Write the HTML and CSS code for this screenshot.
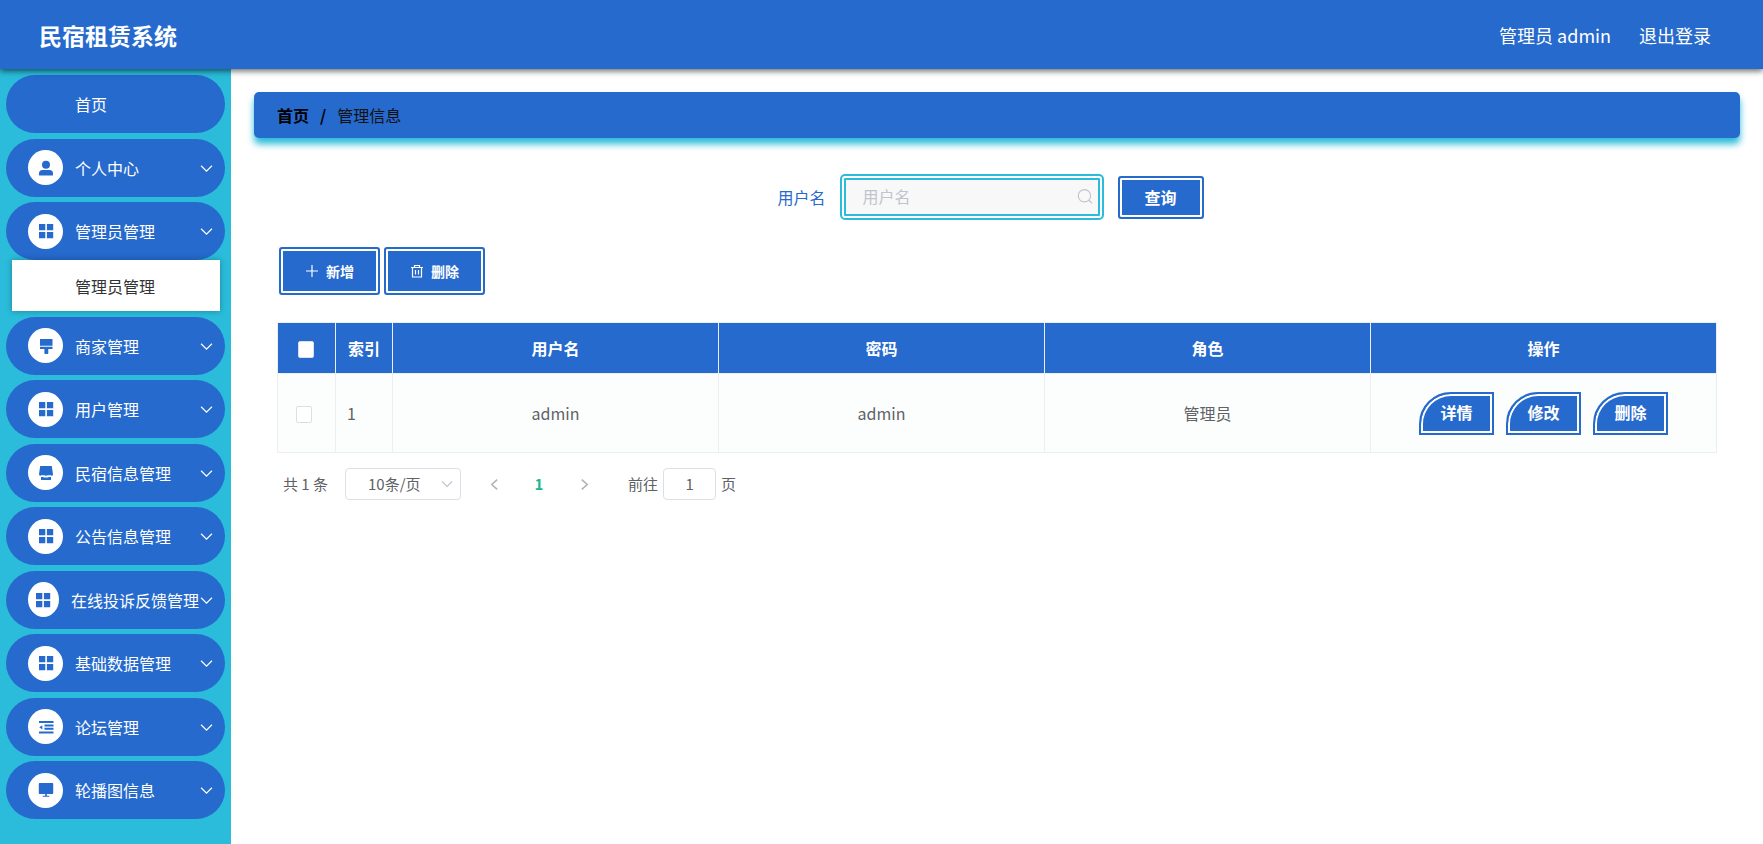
FILE: index.html
```html
<!DOCTYPE html>
<html lang="zh-CN">
<head>
<meta charset="utf-8">
<title>民宿租赁系统</title>
<link rel="stylesheet" href="styles.css">
</head>
<body>
<svg class="defs" aria-hidden="true">
  <symbol id="user" viewBox="0 0 16 16"><path d="M8 .8a4 4 0 0 1 0 8a4 4 0 0 1 0-8zM1 15v-1.500Q1 10 4.500 10h7q3.500 0 3.500 3.500V15q0 .5-.5.5h-13Q1 15.500 1 15z"/></symbol>
  <symbol id="grid" viewBox="0 0 16 16"><path d="M1 1h6.300v6.300H1zM8.900 1h6.300v6.300H8.900zM1 8.900h6.300v6.300H1zM8.900 8.900h6.300v6.300H8.900z"/></symbol>
  <symbol id="brush" viewBox="0 0 16 16"><path d="M2 1h12.500v6.800H2zM2 8.800h12.500v1.700q0 .5-.5.5h-3.700v4.200q0 .8-.8.800H7.200q-.8 0-.8-.8V11H2.500q-.5 0-.5-.5z"/></symbol>
  <symbol id="shop" viewBox="0 0 16 16"><path d="M2.200 1h11.600l1.200 8.300q0 1.200-1 1.400q-1.300.2-2-1q-1 1.400-2 .3q-1 .9-2 .6q-1 .3-2-.6q-1 1.100-2-.3q-.7 1.200-2 1q-1-.2-1-1.400zM3 12h2q1.500.8 3 .5q1.500.3 3-.5h2v2.500q0 .5-.5.5h-9q-.5 0-.5-.5z"/></symbol>
  <symbol id="list" viewBox="0 0 16 16"><path d="M1 2h14.500v2H1zM6.500 5.600h9v2h-9zM6.500 8.800h9v2h-9zM1 12.400h14.500v2H1zM4.300 6.200v4.200L1.300 8.300z"/></symbol>
  <symbol id="monitor" viewBox="0 0 16 16"><path d="M1.500 1h13q.7 0 .7.700v9.600q0 .7-.7.700h-13q-.7 0-.7-.7V1.700Q.8 1 1.500 1zM7.200 12h1.600v1.800h2.500v1H4.700v-1h2.500z"/></symbol>
  <symbol id="down" viewBox="0 0 12 12"><path d="M1 3.500l5 5l5-5" fill="none" stroke="currentColor" stroke-width="1.100"/></symbol>
</svg>

<header class="topbar">
  <h1 class="brand">民宿租赁系统</h1>
  <div class="account"><span>管理员 admin</span><a href="#">退出登录</a></div>
</header>

<div class="layout">
  <nav class="sidebar">
    <button class="item item-home">首页</button>
    <button class="item"><span class="disc"><svg><use href="#user"/></svg></span>个人中心<svg class="arrow"><use href="#down"/></svg></button>
    <div class="group">
      <button class="item"><span class="disc"><svg><use href="#grid"/></svg></span>管理员管理<svg class="arrow"><use href="#down"/></svg></button>
      <a class="sub" href="#">管理员管理</a>
    </div>
    <button class="item"><span class="disc"><svg><use href="#brush"/></svg></span>商家管理<svg class="arrow"><use href="#down"/></svg></button>
    <button class="item"><span class="disc"><svg><use href="#grid"/></svg></span>用户管理<svg class="arrow"><use href="#down"/></svg></button>
    <button class="item"><span class="disc"><svg><use href="#shop"/></svg></span>民宿信息管理<svg class="arrow"><use href="#down"/></svg></button>
    <button class="item"><span class="disc"><svg><use href="#grid"/></svg></span>公告信息管理<svg class="arrow"><use href="#down"/></svg></button>
    <button class="item"><span class="disc"><svg><use href="#grid"/></svg></span>在线投诉反馈管理<svg class="arrow"><use href="#down"/></svg></button>
    <button class="item"><span class="disc"><svg><use href="#grid"/></svg></span>基础数据管理<svg class="arrow"><use href="#down"/></svg></button>
    <button class="item"><span class="disc"><svg><use href="#list"/></svg></span>论坛管理<svg class="arrow"><use href="#down"/></svg></button>
    <button class="item"><span class="disc"><svg><use href="#monitor"/></svg></span>轮播图信息<svg class="arrow"><use href="#down"/></svg></button>
  </nav>

  <main class="main">
    <div class="crumbs"><a href="#">首页</a><b>/</b><span>管理信息</span></div>

    <div class="content">
      <form class="search">
        <label for="username">用户名</label>
        <div class="field">
          <input id="username" type="text" placeholder="用户名">
          <svg viewBox="0 0 16 16"><path d="M7 1.500a5.800 5.800 0 1 1 0 11.600a5.800 5.800 0 1 1 0-11.600zM11.200 11.500l3 3" fill="none" stroke="currentColor" stroke-width="1.100"/></svg>
        </div>
        <button class="btn btn-query" type="button">查询</button>
      </form>

      <div class="tools">
        <button class="btn btn-tool"><svg viewBox="0 0 14 14"><path d="M7 1v12M1 7h12" fill="none" stroke="currentColor" stroke-width="1.200"/></svg>新增</button>
        <button class="btn btn-tool"><svg viewBox="0 0 14 14"><path d="M1 3.500h12M4.500 3.300V1.500h5v1.800M2.500 3.500V13h9V3.500M5.500 6v4.500M8.500 6v4.500" fill="none" stroke="currentColor" stroke-width="1.200"/></svg>删除</button>
      </div>

      <table class="grid">
        <colgroup><col class="c-check"><col class="c-index"><col><col><col><col class="c-actions"></colgroup>
        <thead><tr><th class="pick-all"><input type="checkbox" aria-label="全选"></th><th>索引</th><th>用户名</th><th>密码</th><th>角色</th><th>操作</th></tr></thead>
        <tbody><tr>
          <td class="pick"><input type="checkbox" aria-label="选择"></td><td class="index">1</td><td>admin</td><td>admin</td><td>管理员</td>
          <td><div class="actions"><button class="btn btn-row">详情</button><button class="btn btn-row">修改</button><button class="btn btn-row">删除</button></div></td>
        </tr></tbody>
      </table>

      <div class="pager">
        <span>共 1 条</span>
        <div class="size"><select aria-label="每页条数"><option>10条/页</option></select><svg><use href="#down"/></svg></div>
        <div class="pages">
          <button aria-label="上一页"><svg viewBox="0 0 12 12"><path d="M8.500 1.500l-5 4.500l5 4.500" fill="none" stroke="currentColor" stroke-width="1.500"/></svg></button>
          <button class="current">1</button>
          <button aria-label="下一页"><svg viewBox="0 0 12 12"><path d="M3.500 1.500l5 4.500l-5 4.500" fill="none" stroke="currentColor" stroke-width="1.500"/></svg></button>
        </div>
        <label class="jump">前往<input type="text" value="1">页</label>
      </div>
    </div>
  </main>
</div>
</body>
</html>
```

FILE: styles.css
```css
:root {
  --blue: #266acd;
  --teal: #2abcda;
  --line: #ebeef5;
  --text: #606266;
}

* { box-sizing: border-box; }

body {
  margin: 0;
  min-height: 100vh;
  display: flex;
  flex-direction: column;
  background: #fff;
  color: var(--text);
  font: 16px/24px "Noto Sans CJK SC", "Noto Sans", sans-serif;
}

button, input, select { font: inherit; color: inherit; margin: 0; }
button { cursor: pointer; }
a { color: inherit; text-decoration: none; }
.defs { display: none; }

.topbar {
  position: relative;
  z-index: 1;
  display: flex;
  align-items: center;
  justify-content: space-between;
  height: 69px;
  padding: 0 52px 0 39px;
  background: var(--blue);
  color: #fff;
  box-shadow: 0 2px 6px rgba(0, 0, 0, .6);
}
.brand { margin: 0; font-size: 23px; line-height: 32px; font-weight: 700; }
.account { display: flex; gap: 28px; font-size: 18px; }

.layout { flex: 1; display: flex; }

.sidebar {
  flex: 0 0 231px;
  display: flex;
  flex-direction: column;
  justify-content: space-between;
  padding: 6px 6px 25px;
  background: var(--teal);
}
.item {
  position: relative;
  display: flex;
  align-items: center;
  gap: 12px;
  width: 100%;
  height: 58px;
  padding: 0 26px 0 22px;
  border: 0;
  border-radius: 29px;
  background: var(--blue);
  color: #fff;
  white-space: nowrap;
}
.item-home { padding-left: 69px; }
.disc {
  flex: 0 1 35px;
  min-width: 0;
  height: 35px;
  display: flex;
  align-items: center;
  justify-content: center;
  border-radius: 50%;
  background: #fff;
  color: var(--blue);
}
.disc svg { flex: none; width: 16px; height: 16px; fill: currentColor; }
.arrow { position: absolute; right: 12px; top: 23px; width: 13px; height: 13px; }
.sub {
  position: relative;
  display: flex;
  align-items: center;
  height: 51px;
  margin: 0 5px 0 6px;
  padding-left: 63px;
  background: #fff;
  color: #333;
  box-shadow: 0 0 6px rgba(0, 0, 0, .3);
}

.main { flex: 1; min-width: 0; padding: 23px 23px 0; }
.crumbs {
  display: flex;
  align-items: center;
  gap: 11px;
  height: 46px;
  padding: 0 23px;
  border-radius: 5px;
  background: var(--blue);
  color: #111;
  box-shadow: 0 6px 7px var(--teal);
}
.crumbs a, .crumbs b { font-weight: 700; color: #000; }

.content { padding: 36px 23px 0; }

.search {
  display: flex;
  align-items: center;
  justify-content: center;
  gap: 14px;
  padding-right: 13px;
  color: var(--blue);
}
.field { position: relative; color: #c0c4cc; }
.field input {
  display: block;
  width: 264px;
  height: 46px;
  padding: 0 32px 2px 17px;
  border: 6px double var(--teal);
  border-radius: 5px;
  background: #f8f8f8;
  background-clip: padding-box;
  color: var(--text);
}
.field input::placeholder { color: #c0c4cc; opacity: 1; }
.field svg { position: absolute; right: 10px; top: 14px; width: 17px; height: 17px; }

.btn {
  display: inline-flex;
  align-items: center;
  justify-content: center;
  gap: 7px;
  padding: 0;
  border: 2px solid var(--blue);
  border-radius: 3px;
  background: var(--blue);
  box-shadow: inset 0 0 0 2px #fff;
  color: #fff;
  font-weight: 700;
}
.btn-query { width: 86px; height: 43px; }
.btn-tool { width: 101px; height: 48px; font-size: 14px; }
.btn-tool svg { width: 14px; height: 14px; }
.btn-row { width: 75px; height: 43px; padding-bottom: 2px; border-radius: 32px 0 0 0; }

.tools { display: flex; gap: 4px; margin: 27px 0 27px 2px; }

.grid {
  width: 100%;
  table-layout: fixed;
  border-collapse: collapse;
  text-align: center;
}
.c-check { width: 58px; }
.c-index { width: 57px; }
.c-actions { width: 346px; }
.grid th, .grid td { border: 1px solid var(--line); padding: 0; }
.grid th { height: 51px; background: var(--blue); color: #fff; font-weight: 700; }
.grid td { height: 79px; background: #fcfefe; }
.grid .index { padding: 0 11px; text-align: left; }
.grid .pick-all { padding-right: 1px; }
.grid .pick { padding-right: 6px; }
.grid input {
  appearance: none;
  display: block;
  width: 16px;
  height: 17px;
  margin: 2px auto 0;
  border: 1px solid #dcdfe6;
  border-radius: 2px;
  background: #fff;
}
.actions { display: flex; justify-content: center; gap: 12px; }

.pager {
  display: flex;
  align-items: center;
  margin-top: 15px;
  padding-left: 6px;
  font-size: 15px;
}
.size { position: relative; margin-left: 17px; color: #c0c4cc; }
.size select {
  appearance: none;
  display: block;
  width: 116px;
  height: 32px;
  padding: 0 40px 1px 22px;
  border: 1px solid #dcdfe6;
  border-radius: 4px;
  background: #fff;
  color: var(--text);
}
.size svg { position: absolute; right: 8px; top: 10px; width: 12px; height: 12px; }
.pages { display: flex; gap: 5px; margin: 0 24px 0 13px; color: #b0b3ba; }
.pages button {
  display: flex;
  align-items: center;
  justify-content: center;
  width: 40px;
  height: 32px;
  padding: 0;
  border: 0;
  background: none;
}
.pages svg { width: 13px; height: 13px; }
.pages .current { color: #18b794; font-weight: 700; }
.jump { display: flex; align-items: center; gap: 5px; }
.jump input {
  width: 53px;
  height: 32px;
  padding: 0 0 2px;
  border: 1px solid #dcdfe6;
  border-radius: 4px;
  text-align: center;
}
```
